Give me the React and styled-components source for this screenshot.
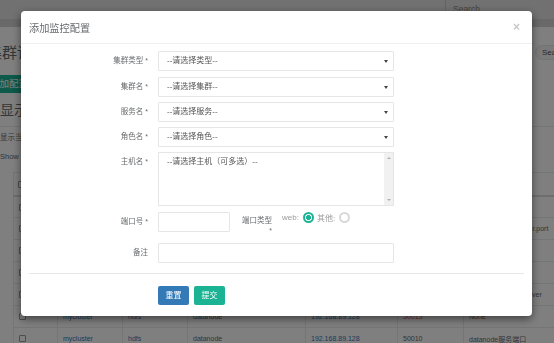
import React from 'react'
import styled, { createGlobalStyle } from 'styled-components'

const GlobalStyle = createGlobalStyle`
  * { box-sizing: border-box; }
  html, body {
    margin: 0;
    padding: 0;
    width: 554px;
    height: 343px;
    overflow: hidden;
    background: #fff;
  }
  body {
    font-family: "Liberation Sans", "Noto Sans CJK SC", sans-serif;
    color: #676a6c;
  }
`

const rows = [
  { name: 'mycluster', svc: 'hdfs', role: 'namenode', host: '192.168.89.128', port: '50070', note: 'web端口' },
  { name: 'mycluster', svc: 'hdfs', role: 'datanode', host: '192.168.89.128', port: '50075', note: 'dfs.datanode.handler.port' },
  { name: 'mycluster', svc: 'hdfs', role: 'datanode', host: '192.168.89.128', port: '50020', note: 'ipc端口' },
  { name: 'mycluster', svc: 'hdfs', role: 'namenode', host: '192.168.89.128', port: '8020', note: 'rpc端口' },
  { name: 'mycluster', svc: 'hdfs', role: 'journalnode', host: '192.168.89.128', port: '8485', note: 'journalnode jmxnserver' },
  { name: 'mycluster', svc: 'hdfs', role: 'datanode', host: '192.168.89.128', port: '50015', note: 'None', bad: true },
  { name: 'mycluster', svc: 'hdfs', role: 'datanode', host: '192.168.89.128', port: '50010', note: 'datanode服务端口' },
]

const selects = [
  { label: '集群类型', text: '--请选择类型--' },
  { label: '集群名', text: '--请选择集群--' },
  { label: '服务名', text: '--请选择服务--' },
  { label: '角色名', text: '--请选择角色--' },
]

export default function App() {
  return (
    <>
      <GlobalStyle />
      <Page>
        <NavBar>
          <NavSearch>Search</NavSearch>
        </NavBar>
        <SubBar />
        <Content>
          <TitleRow>
            <PageTitle>集群详情</PageTitle>
            <SearchButton>Search</SearchButton>
          </TitleRow>
          <AddButton>添加配置</AddButton>
          <Panel>
            <PanelHeading>显示配置</PanelHeading>
            <Hint>显示当前集群的监控配置</Hint>
            <ShowLine>Show 10 entries</ShowLine>
            <Table>
              <colgroup>
                <col style={{ width: 44 }} />
                <col style={{ width: 65 }} />
                <col style={{ width: 65 }} />
                <col style={{ width: 118 }} />
                <col style={{ width: 92 }} />
                <col style={{ width: 66 }} />
                <col style={{ width: 190 }} />
              </colgroup>
              <thead>
                <tr>
                  <Th><Check /></Th>
                  <Th>集群名</Th>
                  <Th>服务名</Th>
                  <Th>角色名</Th>
                  <Th>主机名</Th>
                  <Th>端口号</Th>
                  <Th>备注</Th>
                </tr>
              </thead>
              <tbody>
                {rows.map((r, i) => (
                  <tr key={i}>
                    <Td><Check /></Td>
                    <Td $link>{r.name}</Td>
                    <Td $link>{r.svc}</Td>
                    <Td>{r.role}</Td>
                    <Td $link>{r.host}</Td>
                    <Td $bad={r.bad}>{r.port}</Td>
                    <Td>{r.note}</Td>
                  </tr>
                ))}
              </tbody>
            </Table>
          </Panel>
        </Content>
      </Page>

      <Backdrop />

      <Modal>
        <ModalHeader>
          <ModalTitle>添加监控配置</ModalTitle>
          <Close>×</Close>
        </ModalHeader>
        <ModalBody>
          {selects.map((s) => (
            <FormRow key={s.label}>
              <Label>{s.label} <Req>*</Req></Label>
              <Select>{s.text}</Select>
            </FormRow>
          ))}
          <FormRow $top>
            <Label>主机名 <Req>*</Req></Label>
            <HostBox>
              <HostText>--请选择主机（可多选）--</HostText>
              <ScrollTrack>
                <Arrow $up />
                <Arrow />
              </ScrollTrack>
            </HostBox>
          </FormRow>
          <FormRow $top $space={6}>
            <Label>端口号 <Req>*</Req></Label>
            <PortLine>
              <PortInput />
              <PortTypeLabel>端口类型 <Req>*</Req></PortTypeLabel>
              <RadioGroup>
                <RadioText>web:</RadioText>
                <Radio $checked />
                <RadioText $gap>其他:</RadioText>
                <Radio />
              </RadioGroup>
            </PortLine>
          </FormRow>
          <FormRow $space={7}>
            <Label>备注</Label>
            <TextInput />
          </FormRow>
        </ModalBody>
        <Divider />
        <Footer>
          <Button $color="#337ab7">重置</Button>
          <Button $color="#1ab394">提交</Button>
        </Footer>
      </Modal>
    </>
  )
}

/* ---------- page behind the dialog ---------- */

const Page = styled.div`
  width: 554px;
  height: 343px;
  overflow: hidden;
`

const NavBar = styled.div`
  height: 19px;
  background: #e2e2e2;
  display: flex;
  justify-content: flex-end;
`

const NavSearch = styled.div`
  width: 109px;
  border-left: 1px solid #c4c4c4;
  padding-left: 7px;
  font-size: 8.5px;
  line-height: 18px;
  color: #8a8a8a;
`

const SubBar = styled.div`
  height: 8px;
  background: #d2d2d2;
`

const Content = styled.div`
  margin-left: -13px;
`

const TitleRow = styled.div`
  display: flex;
  justify-content: space-between;
  align-items: flex-start;
  padding-top: 18px;
`

const PageTitle = styled.div`
  font-size: 15px;
  line-height: 16px;
  color: #676a6c;
`

const SearchButton = styled.div`
  width: 40px;
  height: 15px;
  margin-right: -21px;
  border: 1px solid #e5e6e7;
  border-radius: 8px;
  background: #f4f4f4;
  font-size: 8px;
  line-height: 13px;
  padding-left: 6px;
  color: #555;
`

const AddButton = styled.div`
  display: inline-block;
  margin-top: 14px;
  margin-left: -3px;
  height: 18px;
  padding: 0 6px;
  background: #1ab394;
  color: #fff;
  font-size: 9.5px;
  line-height: 18px;
  border-radius: 2px;
`

const Panel = styled.div`
  margin-top: 9px;
  padding-left: 13px;
`

const PanelHeading = styled.div`
  height: 25px;
  font-size: 14px;
  line-height: 16px;
  border-bottom: 1px solid #e7eaec;
`

const Hint = styled.div`
  margin-top: 7px;
  font-size: 7.5px;
  line-height: 8px;
`

const ShowLine = styled.div`
  margin-top: 11px;
  font-size: 7.5px;
  line-height: 8px;
`

const Table = styled.table`
  margin-top: 11px;
  margin-left: 13px;
  width: 640px;
  table-layout: fixed;
  border-collapse: collapse;
  font-size: 7px;
`

const Th = styled.th`
  height: 23px;
  text-align: left;
  font-weight: bold;
  padding: 0 4px;
  border: 1px solid #e7eaec;
  border-bottom: 2px solid #dcdcdc;
  white-space: nowrap;
  overflow: hidden;
`

const Td = styled.td`
  height: 22px;
  padding: 0 5px;
  border: 1px solid #e7eaec;
  white-space: nowrap;
  overflow: hidden;
  color: ${(p) => (p.$bad ? '#ed5565' : p.$link ? '#337ab7' : '#676a6c')};
`

const Check = styled.span`
  display: inline-block;
  width: 7px;
  height: 7px;
  border: 1px solid #9a9a9a;
  border-radius: 1px;
  background: #fff;
  vertical-align: middle;
`

/* ---------- dialog ---------- */

const Backdrop = styled.div`
  position: fixed;
  inset: 0;
  background: rgba(0, 0, 0, 0.5);
`

const Modal = styled.div`
  position: fixed;
  top: 11px;
  left: 21px;
  width: 511px;
  background: #fff;
  border-radius: 4px;
  box-shadow: 0 3px 9px rgba(0, 0, 0, 0.5);
`

const ModalHeader = styled.div`
  height: 33px;
  padding: 0 12px 0 8px;
  border-bottom: 1px solid #efefef;
  display: flex;
  align-items: center;
  justify-content: space-between;
`

const ModalTitle = styled.div`
  font-size: 10.2px;
  color: #676a6c;
`

const Close = styled.div`
  font-size: 12px;
  font-weight: bold;
  color: #c8c8c8;
  line-height: 12px;
`

const ModalBody = styled.div`
  padding-top: 2px;
`

const FormRow = styled.div`
  display: grid;
  grid-template-columns: 127px 236px;
  column-gap: 10px;
  align-items: ${(p) => (p.$top ? 'start' : 'center')};
  margin-top: ${(p) => (p.$space ?? 5.3)}px;
`

const Label = styled.div`
  text-align: right;
  font-size: 7.5px;
  line-height: 20px;
  color: #676a6c;
`

const Req = styled.span`
  font-size: 7px;
`

const Select = styled.div`
  position: relative;
  height: 20px;
  border: 1px solid #e5e6e7;
  border-radius: 1px;
  padding: 0 8px;
  font-size: 8px;
  line-height: 18px;
  color: #555;

  &::after {
    content: '';
    position: absolute;
    right: 5px;
    top: 8px;
    border-left: 2px solid transparent;
    border-right: 2px solid transparent;
    border-top: 3px solid #444;
  }
`

const HostBox = styled.div`
  height: 54px;
  border: 1px solid #e5e6e7;
  display: flex;
`

const HostText = styled.div`
  flex: 1;
  padding: 4px 8px 0;
  font-size: 8px;
  line-height: 10px;
  color: #555;
`

const ScrollTrack = styled.div`
  width: 9px;
  background: #f1f1f1;
  display: flex;
  flex-direction: column;
  justify-content: space-between;
  align-items: center;
  padding: 4px 0;
`

const Arrow = styled.span`
  width: 0;
  height: 0;
  border-left: 2px solid transparent;
  border-right: 2px solid transparent;
  ${(p) => (p.$up ? 'border-bottom: 2px solid #b0b0b0;' : 'border-top: 2px solid #b0b0b0;')}
`

const PortLine = styled.div`
  display: flex;
  align-items: flex-start;
`

const PortInput = styled.div`
  width: 72px;
  height: 20px;
  border: 1px solid #e5e6e7;
  border-radius: 1px;
`

const PortTypeLabel = styled.div`
  width: 31px;
  margin-left: 11px;
  margin-top: 4px;
  text-align: right;
  font-size: 7.5px;
  line-height: 10px;
  color: #676a6c;
`

const RadioGroup = styled.div`
  display: flex;
  align-items: center;
  height: 11px;
  margin-left: 10px;
`

const RadioText = styled.span`
  font-size: 8px;
  color: #9a9a9a;
  margin-left: ${(p) => (p.$gap ? 3 : 0)}px;
  margin-right: 4px;
`

const Radio = styled.span`
  width: 11px;
  height: 11px;
  border-radius: 50%;
  border: 2px solid ${(p) => (p.$checked ? '#1ab394' : '#d8d8d8')};
  background: ${(p) => (p.$checked ? 'radial-gradient(circle, #1ab394 0 2.2px, #fff 2.7px)' : '#fff')};
`

const TextInput = styled.div`
  height: 20px;
  border: 1px solid #e5e6e7;
  border-radius: 1px;
`

const Divider = styled.div`
  margin: 10px 8px 0;
  border-top: 1px solid #e7e7e7;
`

const Footer = styled.div`
  display: flex;
  gap: 5px;
  padding: 12px 0 11px 137px;
`

const Button = styled.div`
  width: 31px;
  height: 19px;
  border-radius: 2px;
  background: ${(p) => p.$color};
  color: #fff;
  font-size: 8px;
  line-height: 19px;
  text-align: center;
`
